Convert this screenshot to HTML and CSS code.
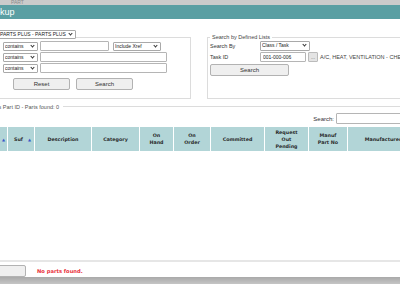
FILE: index.html
```html
<!DOCTYPE html>
<html>
<head>
<meta charset="utf-8">
<link rel="stylesheet" href="styles.css">
</head>
<body>
<div class="page">
  <div class="topbar"><span class="topbar-text">PART</span></div>
  <div class="titlebar"><span class="title">Lookup</span></div>

  <div class="source-row">
    <span class="selbox sb-source"><select class="sel"><option>PARTS PLUS - PARTS PLUS</option></select></span>
  </div>

  <div class="panels">
    <fieldset class="panel panel-left">
      <legend class="legend">Search by Part</legend>
      <div class="row">
        <span class="lbl">Part ID</span>
        <span class="selbox sb-op"><select class="sel"><option>contains</option></select></span>
        <input class="inp inp-short" type="text">
        <span class="selbox sb-xref"><select class="sel"><option>Include Xref</option></select></span>
      </div>
      <div class="row">
        <span class="lbl">Description</span>
        <span class="selbox sb-op"><select class="sel"><option>contains</option></select></span>
        <input class="inp inp-long" type="text">
      </div>
      <div class="row">
        <span class="lbl">Manufacturer</span>
        <span class="selbox sb-op"><select class="sel"><option>contains</option></select></span>
        <input class="inp inp-long" type="text">
      </div>
      <div class="btn-row">
        <button class="btn btn-half">Reset</button>
        <button class="btn btn-half">Search</button>
      </div>
    </fieldset>

    <fieldset class="panel panel-right">
      <legend class="legend">Search by Defined Lists</legend>
      <div class="row row-r">
        <span class="lbl-r">Search By</span>
        <span class="selbox sb-by"><select class="sel"><option>Class / Task</option></select></span>
      </div>
      <div class="row row-r">
        <span class="lbl-r">Task ID</span>
        <input class="inp inp-task" type="text" value="001-000-006">
        <button class="btn-dots">...</button>
        <span class="task-desc">A/C, HEAT, VENTILATION - CHECK SYSTEM</span>
      </div>
      <button class="btn btn-search">Search</button>
    </fieldset>
  </div>

  <div class="results-legend">
    <span class="results-text">Results Part ID - Parts found: 0</span>
    <span class="results-line"></span>
  </div>

  <div class="table-tools">
    <span class="search-lbl">Search:</span>
    <input class="inp inp-filter" type="text">
  </div>

  <table class="grid">
    <thead>
      <tr>
        <th class="c1"><span class="arrow">▲</span></th>
        <th class="c2">Suf<span class="arrow arrow-gap">▲</span></th>
        <th class="c3">Description</th>
        <th class="c4">Category</th>
        <th class="c5">On<br>Hand</th>
        <th class="c6">On<br>Order</th>
        <th class="c7">Committed</th>
        <th class="c8">Request<br>Out<br>Pending</th>
        <th class="c9">Manuf<br>Part No</th>
        <th class="c10">Manufacturer</th>
      </tr>
    </thead>
  </table>

  <div class="table-body"></div>

  <div class="footer">
    <button class="btn btn-foot">Close</button>
    <span class="msg">No parts found.</span>
  </div>
  <div class="bottombar"></div>
</div>
</body>
</html>
```

FILE: styles.css
```css
html, body {
  margin: 0;
  padding: 0;
  background: #ffffff;
}

.page {
  width: 400px;
  height: 284px;
  overflow: hidden;
  font-family: "Liberation Sans", Arial, sans-serif;
  color: #333;
}

.topbar {
  height: 5px;
  background: #cbcbcb;
  overflow: hidden;
  padding-left: 11px;
}

.topbar-text {
  display: block;
  font-size: 5px;
  line-height: 4px;
  color: #8a8a8a;
}

.titlebar {
  height: 14px;
  background: #5a9fa3;
  overflow: hidden;
}

.title {
  display: block;
  margin-left: -15px;
  font-size: 9px;
  line-height: 15px;
  color: #ffffff;
}

.sel, .inp, .btn, .btn-dots {
  font-family: "Liberation Sans", Arial, sans-serif;
  box-sizing: border-box;
  margin: 0;
}

.selbox {
  position: relative;
  display: inline-block;
  flex: none;
  height: 9px;
}

.selbox::after {
  content: "";
  position: absolute;
  right: 4px;
  top: 2px;
  width: 2px;
  height: 2px;
  border-right: 1px solid #333;
  border-bottom: 1px solid #333;
  transform: rotate(45deg);
  pointer-events: none;
}

.sel {
  -webkit-appearance: none;
  appearance: none;
  display: block;
  width: 100%;
  height: 100%;
  font-size: 5px;
  line-height: 7px;
  padding: 0 1px;
  border: 1px solid #a9a9a9;
  border-radius: 1px;
  background: #fff;
  color: #222;
}

.source-row {
  height: 9px;
  margin-top: 3px;
}

.sb-source {
  width: 78px;
  margin-left: -2px;
}

.panels {
  display: flex;
  margin-top: 3px;
}

.panel {
  flex: none;
  margin: 0;
  padding: 0 2px 2px 2px;
  border: 1px solid #dcdcdc;
  box-sizing: border-box;
  height: 65px;
  min-width: 0;
}

.legend {
  font-size: 5.5px;
  line-height: 6px;
  padding: 0 2px;
  color: #444;
}

.panel-left {
  margin-left: -45px;
  width: 236px;
}

.panel-right {
  margin-left: 16px;
  width: 220px;
}

.row {
  display: flex;
  align-items: center;
  height: 10px;
  margin-top: 1px;
}

.lbl {
  width: 43px;
  flex: none;
  font-size: 5.5px;
  color: #333;
  white-space: nowrap;
  overflow: hidden;
}

.sb-op {
  width: 35px;
  margin-left: 2px;
}

.inp {
  flex: none;
  height: 10px;
  border: 1px solid #b5b5b5;
  border-radius: 1px;
  font-size: 5px;
  padding: 0 2px;
  background: #fff;
  color: #222;
}

.inp-short {
  width: 69px;
  margin-left: 2px;
}

.inp-long {
  width: 127px;
  margin-left: 2px;
}

.sb-xref {
  width: 48px;
  margin-left: 4px;
}

.btn-row {
  display: flex;
  gap: 6px;
  margin-top: 5px;
  margin-left: 55px;
}

.btn {
  height: 12px;
  border: 1px solid #b2b2b2;
  border-radius: 2px;
  background: #efefef;
  font-size: 6px;
  color: #333;
  padding: 0;
}

.btn-half {
  width: 57px;
}

.row-r {
  margin-top: 0;
  height: 11px;
}

.lbl-r {
  width: 50px;
  flex: none;
  font-size: 5.5px;
  color: #333;
}

.sb-by {
  width: 50px;
  height: 10px;
}

.inp-task {
  width: 46px;
}

.btn-dots {
  flex: none;
  width: 10px;
  height: 10px;
  margin-left: 2px;
  border: 1px solid #bbb;
  border-radius: 1px;
  background: #e4e4e4;
  font-size: 5px;
  color: #666;
  padding: 0;
  line-height: 6px;
}

.task-desc {
  margin-left: 2px;
  font-size: 5.5px;
  color: #444;
  white-space: nowrap;
}

.btn-search {
  display: block;
  width: 79px;
  margin-top: 2px;
}

.results-legend {
  display: flex;
  align-items: center;
  height: 7px;
  margin-top: 4px;
  margin-left: -17px;
}

.results-text {
  font-size: 5.5px;
  color: #555;
  white-space: nowrap;
}

.results-line {
  flex: 1;
  height: 1px;
  background: #dcdcdc;
  margin-left: 4px;
}

.table-tools {
  display: flex;
  justify-content: flex-end;
  align-items: center;
  height: 11px;
  margin-top: 3px;
  margin-right: -10px;
}

.search-lbl {
  font-size: 6px;
  color: #333;
  margin-right: 2px;
}

.inp-filter {
  width: 74px;
  height: 11px;
}

.grid {
  margin-top: 3px;
  margin-left: -13px;
  border-collapse: separate;
  border-spacing: 1px 0;
  table-layout: fixed;
  width: 432px;
}

.grid th {
  height: 24px;
  padding: 0;
  background: #b2d5d7;
  font-family: "DejaVu Sans", Verdana, sans-serif;
  font-weight: bold;
  font-size: 4.8px;
  line-height: 7px;
  color: #2b2b2b;
  text-align: center;
  vertical-align: middle;
}

.arrow {
  color: #3a55c8;
  font-size: 4px;
}

.arrow-gap {
  margin-left: 5px;
}

.c1 { width: 17px; }
.c2 { width: 23px; }
.c3 { width: 56px; }
.c4 { width: 47px; }
.c5 { width: 33px; }
.c6 { width: 36px; }
.c7 { width: 53px; }
.c8 { width: 43px; }
.c9 { width: 38px; }
.c10 { width: 70px; }

.grid th.c1 { text-align: right; padding-right: 2px; }
.grid th.c2 { padding-left: 3px; }

.table-body {
  height: 109px;
}

.footer {
  display: flex;
  align-items: center;
  height: 15px;
  border-top: 2px solid #e6e6e6;
}

.btn-foot {
  width: 28px;
  height: 12px;
  margin-left: -2px;
  margin-top: 3px;
  color: transparent;
  font-size: 5px;
}

.msg {
  margin-left: 11px;
  margin-top: 3px;
  font-family: "DejaVu Sans", Verdana, sans-serif;
  font-weight: bold;
  font-size: 5.2px;
  color: #e8303a;
}

.bottombar {
  height: 8px;
  background: linear-gradient(#a9a9a9, #c9c9c9);
}
```
